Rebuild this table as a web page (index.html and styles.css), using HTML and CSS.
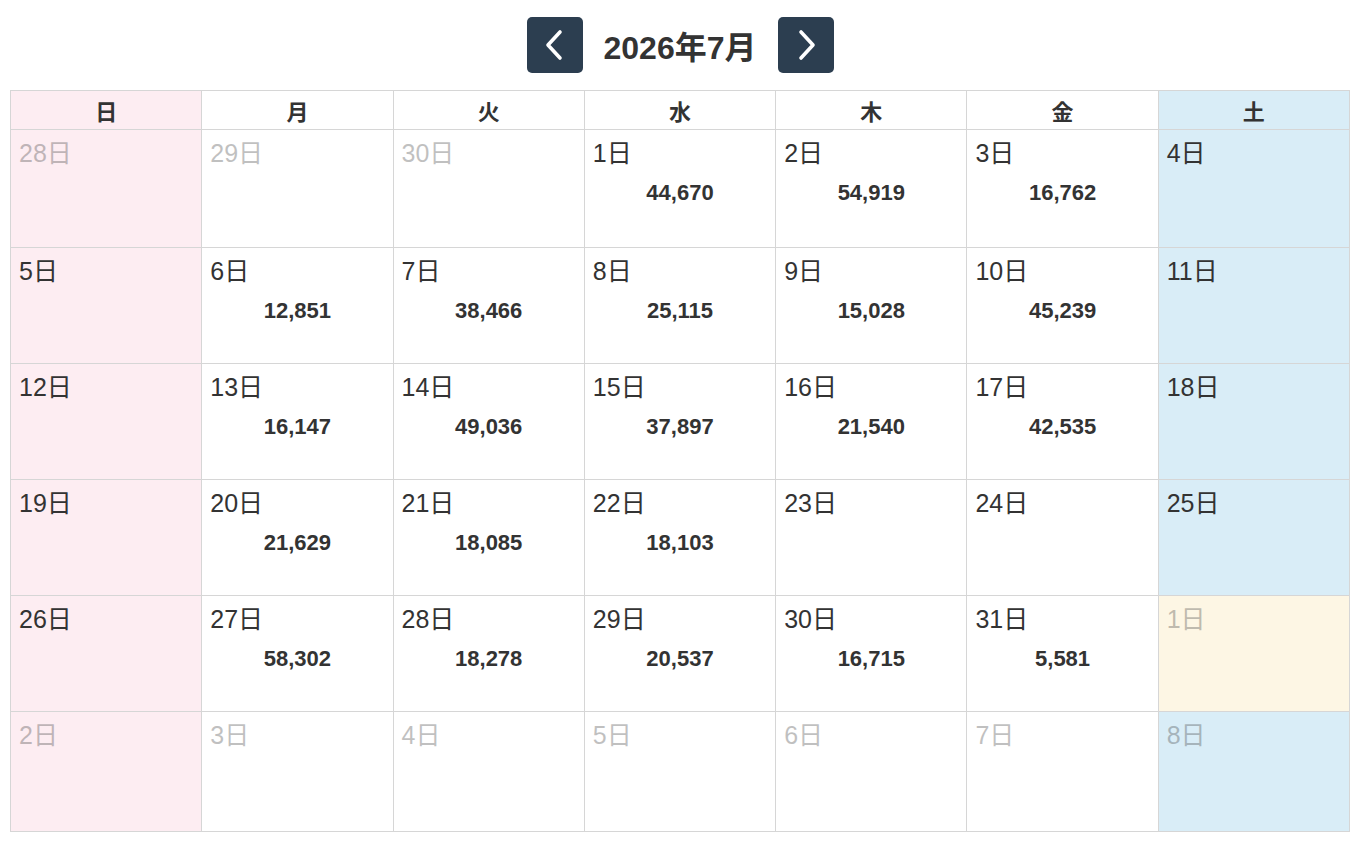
FILE: index.html
```html
<!DOCTYPE html>
<html lang="ja">
<head>
<meta charset="utf-8">
<title>カレンダー</title>
<link rel="stylesheet" href="styles.css">
</head>
<body>
<div class="page">
  <div class="toolbar">
    <button class="nav-btn" aria-label="前の月">
      <svg viewBox="0 0 24 34" width="24" height="34"><polyline points="17,4 5,17 17,30" fill="none" stroke="#fff" stroke-width="3.6" stroke-linecap="round" stroke-linejoin="round"/></svg>
    </button>
    <h1 class="title">2026年7月</h1>
    <button class="nav-btn" aria-label="次の月">
      <svg viewBox="0 0 24 34" width="24" height="34"><polyline points="7,4 19,17 7,30" fill="none" stroke="#fff" stroke-width="3.6" stroke-linecap="round" stroke-linejoin="round"/></svg>
    </button>
  </div>
  <div class="calendar">
    <div class="head sun">日</div>
    <div class="head">月</div>
    <div class="head">火</div>
    <div class="head">水</div>
    <div class="head">木</div>
    <div class="head">金</div>
    <div class="head sat">土</div>

    <div class="day sun other"><span class="date">28日</span></div>
    <div class="day other"><span class="date">29日</span></div>
    <div class="day other"><span class="date">30日</span></div>
    <div class="day"><span class="date">1日</span><span class="count">44,670</span></div>
    <div class="day"><span class="date">2日</span><span class="count">54,919</span></div>
    <div class="day"><span class="date">3日</span><span class="count">16,762</span></div>
    <div class="day sat"><span class="date">4日</span></div>

    <div class="day sun"><span class="date">5日</span></div>
    <div class="day"><span class="date">6日</span><span class="count">12,851</span></div>
    <div class="day"><span class="date">7日</span><span class="count">38,466</span></div>
    <div class="day"><span class="date">8日</span><span class="count">25,115</span></div>
    <div class="day"><span class="date">9日</span><span class="count">15,028</span></div>
    <div class="day"><span class="date">10日</span><span class="count">45,239</span></div>
    <div class="day sat"><span class="date">11日</span></div>

    <div class="day sun"><span class="date">12日</span></div>
    <div class="day"><span class="date">13日</span><span class="count">16,147</span></div>
    <div class="day"><span class="date">14日</span><span class="count">49,036</span></div>
    <div class="day"><span class="date">15日</span><span class="count">37,897</span></div>
    <div class="day"><span class="date">16日</span><span class="count">21,540</span></div>
    <div class="day"><span class="date">17日</span><span class="count">42,535</span></div>
    <div class="day sat"><span class="date">18日</span></div>

    <div class="day sun"><span class="date">19日</span></div>
    <div class="day"><span class="date">20日</span><span class="count">21,629</span></div>
    <div class="day"><span class="date">21日</span><span class="count">18,085</span></div>
    <div class="day"><span class="date">22日</span><span class="count">18,103</span></div>
    <div class="day"><span class="date">23日</span></div>
    <div class="day"><span class="date">24日</span></div>
    <div class="day sat"><span class="date">25日</span></div>

    <div class="day sun"><span class="date">26日</span></div>
    <div class="day"><span class="date">27日</span><span class="count">58,302</span></div>
    <div class="day"><span class="date">28日</span><span class="count">18,278</span></div>
    <div class="day"><span class="date">29日</span><span class="count">20,537</span></div>
    <div class="day"><span class="date">30日</span><span class="count">16,715</span></div>
    <div class="day"><span class="date">31日</span><span class="count">5,581</span></div>
    <div class="day today other"><span class="date">1日</span></div>

    <div class="day sun other"><span class="date">2日</span></div>
    <div class="day other"><span class="date">3日</span></div>
    <div class="day other"><span class="date">4日</span></div>
    <div class="day other"><span class="date">5日</span></div>
    <div class="day other"><span class="date">6日</span></div>
    <div class="day other"><span class="date">7日</span></div>
    <div class="day sat other"><span class="date">8日</span></div>
  </div>
</div>
</body>
</html>
```

FILE: styles.css
```css
html, body {
  margin: 0;
  padding: 0;
  background: #fff;
}

body {
  font-family: "Liberation Sans", "Noto Sans CJK JP", sans-serif;
  color: #333;
}

.page {
  padding: 17px 12px 0 10px;
}

.toolbar {
  display: flex;
  justify-content: center;
  align-items: center;
  gap: 21px;
  height: 56px;
  margin-bottom: 17px;
}

.nav-btn {
  width: 56px;
  height: 56px;
  border: none;
  border-radius: 5px;
  background: #2c3e50;
  display: flex;
  align-items: center;
  justify-content: center;
  padding: 0;
}

.title {
  margin: 0;
  font-size: 32px;
  font-weight: bold;
  color: #333;
}

.calendar {
  display: grid;
  grid-template-columns: repeat(7, 1fr);
  grid-template-rows: 38px 117px 115px 115px 115px 115px 119px;
  gap: 1px;
  background: #d6d6d6;
  border: 1px solid #d6d6d6;
}

.head {
  background: #fff;
  display: flex;
  align-items: center;
  justify-content: center;
  font-size: 22px;
  font-weight: bold;
  color: #333;
}

.day {
  background: #fff;
  display: flex;
  flex-direction: column;
  padding: 9px 8px;
}

.sun {
  background: #fdedf2;
}

.sat {
  background: #d9edf7;
}

.today {
  background: #fdf6e4;
}

.date {
  font-size: 25px;
  line-height: 28px;
  color: #333;
}

.other .date {
  opacity: 0.3;
}

.count {
  margin-top: 14px;
  text-align: center;
  font-size: 22px;
  line-height: 24px;
  font-weight: bold;
  color: #333;
}
```
